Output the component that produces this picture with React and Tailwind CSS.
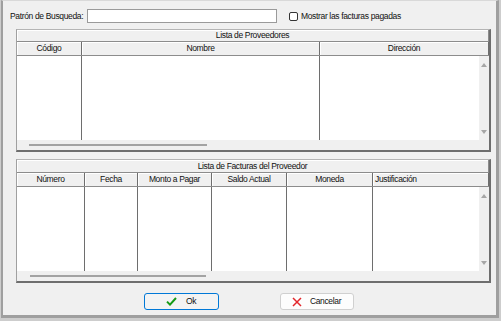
import React from "react";

const cols1 = [
  { label: "Código", w: "w-[65px]" },
  { label: "Nombre", w: "w-[238px]" },
  { label: "Dirección", w: "flex-1" },
];

const cols2 = [
  { label: "Número", w: "w-[68px]" },
  { label: "Fecha", w: "w-[53px]" },
  { label: "Monto a Pagar", w: "w-[74px]" },
  { label: "Saldo Actual", w: "w-[75px]" },
  { label: "Moneda", w: "w-[86px]" },
  { label: "Justificación", w: "flex-1", left: true },
];

function ArrowUp() {
  return (
    <svg width="6" height="4" viewBox="0 0 6 4">
      <path d="M0 4 L3 0 L6 4 Z" fill="#a6a6a6" />
    </svg>
  );
}
function ArrowDown() {
  return (
    <svg width="6" height="4" viewBox="0 0 6 4">
      <path d="M0 0 L3 4 L6 0 Z" fill="#a6a6a6" />
    </svg>
  );
}

function Grid({ title, cols, titleH, dataH, thumbMl, thumbW }) {
  return (
    <div className="flex flex-col border-l border-t border-l-[#a0a0a0] border-t-[#b4b4b4] border-r-2 border-b-2 border-r-[#6e6e6e] border-b-[#6e6e6e] bg-[#f0f0f0]">
      <div
        className={`${titleH} flex items-center justify-center border-b border-[#8c8c8c] shadow-[inset_1px_1px_0_#ffffff] border-r border-r-[#8c8c8c]`}
      >
        <span>{title}</span>
      </div>
      <div className="flex h-[14px] border-b border-[#8c8c8c]">
        {cols.map((c, i) => (
          <div
            key={i}
            className={`${c.w} flex items-center ${c.left ? "justify-start pl-[2px]" : "justify-center"} border-r border-[#6e6e6e] shadow-[inset_1px_1px_0_#ffffff]`}
          >
            <span>{c.label}</span>
          </div>
        ))}
      </div>
      <div className={`flex ${dataH}`}>
        <div className="flex-1 flex bg-white overflow-hidden">
          {cols.map((c, i) => (
            <div
              key={i}
              className={`${c.w} h-full ${i < cols.length - 1 ? "border-r border-[#6e6e6e]" : ""}`}
            />
          ))}
        </div>
        <div className="w-[10px] flex flex-col items-center justify-between pt-[7px] pb-[6px] bg-[#f0f0f0]">
          <ArrowUp />
          <ArrowDown />
        </div>
      </div>
      <div className="h-[10px] flex items-center">
        <div className={`${thumbMl} ${thumbW} h-[2px] bg-[#a3a3a3]`} />
      </div>
    </div>
  );
}

export default function App() {
  return (
    <div className="w-[501px] h-[321px] bg-[#cdcdcd] flex pl-px pb-[3px] pr-[2px] font-['Liberation_Sans',Arial,sans-serif] text-[8.5px] tracking-[-0.35px] text-[#111111] leading-none">
      <div className="flex-1 flex flex-col bg-[#f0f0f0] border-l-2 border-r-[3px] border-b-[3px] border-[#9f9f9f] border-t border-t-[#d9d9d9]">
        {/* Row 1 */}
        <div className="flex items-center h-[14px] mt-[8px] pl-[7px]">
          <span className="w-[77px]">Patrón de Busqueda:</span>
          <div className="w-[190px] h-[14px] bg-white border border-[#9a9a9a]" />
          <div className="ml-[12px] w-[9px] h-[9px] rounded-[2px] border border-[#333333] bg-white" />
          <span className="ml-[3px]">Mostrar las facturas pagadas</span>
        </div>

        {/* Group 1 */}
        <div className="mt-[6px] ml-[13px] mr-[5px]">
          <Grid
            title="Lista de Proveedores"
            cols={cols1}
            titleH="h-[12px]"
            dataH="h-[84px]"
            thumbMl="ml-[12px]"
            thumbW="w-[178px]"
          />
        </div>

        {/* Group 2 */}
        <div className="mt-[7px] ml-[13px] mr-[5px]">
          <Grid
            title="Lista de Facturas del Proveedor"
            cols={cols2}
            titleH="h-[13px]"
            dataH="h-[84px]"
            thumbMl="ml-[13px]"
            thumbW="w-[176px]"
          />
        </div>

        {/* Buttons */}
        <div className="mt-[10px] flex justify-center gap-[61px] pr-[2px]">
          <button className="w-[75px] h-[17px] rounded-[3px] border border-[#0078d7] bg-[#f3f3f3] flex items-center justify-center gap-[9px]">
            <svg width="11" height="9" viewBox="0 0 11 9">
              <path d="M1 4.6 L4 7.6 L10 1" fill="none" stroke="#159a15" strokeWidth="2" />
            </svg>
            <span>Ok</span>
          </button>
          <button className="w-[74px] h-[17px] rounded-[3px] border border-[#d0d0d0] bg-[#fdfdfd] flex items-center justify-center gap-[8px]">
            <svg width="10" height="10" viewBox="0 0 10 10">
              <path d="M1 1 L9 9 M9 1 L1 9" fill="none" stroke="#e3262b" strokeWidth="1.5" />
            </svg>
            <span>Cancelar</span>
          </button>
        </div>
      </div>
    </div>
  );
}
